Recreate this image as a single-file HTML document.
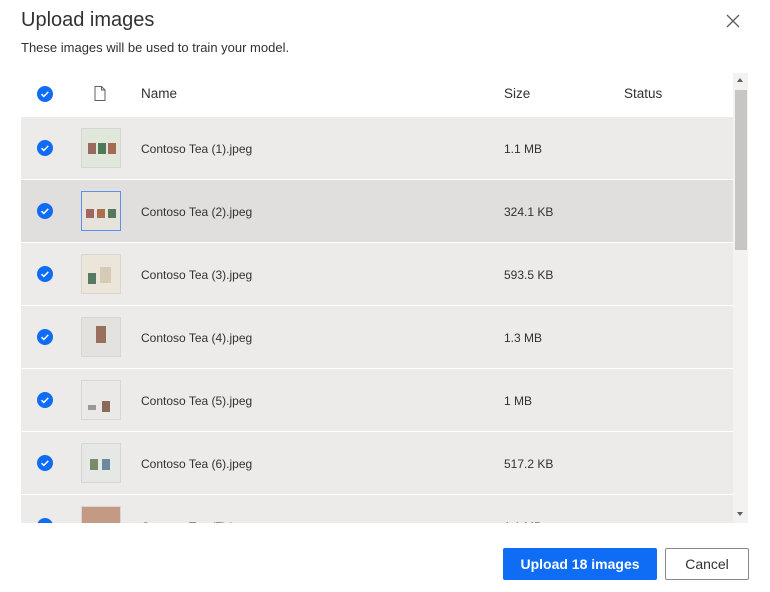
<!DOCTYPE html>
<html><head><style>
body{margin:0;width:770px;height:592px;background:#fff;font-family:"Liberation Sans",sans-serif;color:#323130;position:relative;overflow:hidden}
.abs{position:absolute}
h1{position:absolute;left:21px;top:9px;margin:0;font-size:20px;font-weight:normal;color:#323130}
.sub{left:21px;top:40px;font-size:13px}
.close{left:726px;top:14px}
.hdr{top:86px;font-size:13.5px}
.list{position:absolute;left:21px;top:117px;width:712px;height:406px;overflow:hidden}
.row{position:relative;height:62px;background:#edebe9;border-bottom:1px solid #fff}
.row.sel{background:#e1dfdd}
.chk{position:absolute;left:16px;top:23px;width:16px;height:16px;border-radius:50%;background:#0f6cf4}
.chk svg{position:absolute;left:3px;top:4px}
.th{position:absolute;left:60px;top:11px;width:38px;height:38px;border:1px solid #d8d6d4;background:#e9e8e4}
.th.b{border-color:#5c8ff0}
.nm{position:absolute;left:120px;top:25px;font-size:12px}
.sz{position:absolute;left:483px;top:25px;font-size:12px}
.can{display:inline-block;position:absolute;width:8px;height:11px;top:14px}
.btn{position:absolute;top:548px;height:32px;box-sizing:border-box;font-size:14px;text-align:center;line-height:32px;border-radius:2px}
</style></head><body>
<h1>Upload images</h1>
<div class="abs sub">These images will be used to train your model.</div>
<svg class="abs close" width="14" height="14"><path d="M1 1L13 13M13 1L1 13" stroke="#605e5c" stroke-width="1.3"/></svg>
<div class="abs" style="left:37px;top:86px;width:16px;height:16px;border-radius:50%;background:#0f6cf4"><svg width="16" height="16"><path d="M4.5 8.2l2.3 2.2 4.5-4.5" stroke="#fff" stroke-width="1.5" fill="none"/></svg></div>
<svg class="abs" style="left:94px;top:86px" width="12" height="15"><path d="M1 .5h6.5l3.5 3.5v10.5H1z M7.5 .5V4H11" stroke="#605e5c" fill="none"/></svg>
<div class="abs hdr" style="left:141px">Name</div>
<div class="abs hdr" style="left:504px">Size</div>
<div class="abs hdr" style="left:624px">Status</div>
<div class="abs" style="left:733px;top:73px;width:15px;height:450px;background:#f3f2f1"></div>
<div class="abs" style="left:735px;top:90px;width:12px;height:160px;background:#c8c6c4"></div>
<div class="abs" style="left:737px;top:78px;border:3px solid transparent;border-bottom:4px solid #605e5c;border-top:0"></div>
<div class="abs" style="left:737px;top:512px;border:3px solid transparent;border-top:4px solid #605e5c;border-bottom:0"></div>
<div class="list">
<div class="row"><div class="chk"><svg width="10" height="8"><path d="M1.5 4.2l2.3 2.2 4.5-4.5" stroke="#fff" stroke-width="1.5" fill="none"/></svg></div><div class="th" style="background:#dfe8da"><span class="can" style="left:6px;background:#9a6a60"></span><span class="can" style="left:16px;background:#4f7a5a"></span><span class="can" style="left:26px;background:#a66a52"></span></div><div class="nm">Contoso Tea (1).jpeg</div><div class="sz">1.1 MB</div></div>
<div class="row sel"><div class="chk"><svg width="10" height="8"><path d="M1.5 4.2l2.3 2.2 4.5-4.5" stroke="#fff" stroke-width="1.5" fill="none"/></svg></div><div class="th b" style="background:#e6e2dc"><span class="can" style="left:4px;top:17px;height:9px;background:#a0675e"></span><span class="can" style="left:15px;top:17px;height:9px;background:#a7714e"></span><span class="can" style="left:26px;top:17px;height:9px;background:#537a5c"></span></div><div class="nm">Contoso Tea (2).jpeg</div><div class="sz">324.1 KB</div></div>
<div class="row"><div class="chk"><svg width="10" height="8"><path d="M1.5 4.2l2.3 2.2 4.5-4.5" stroke="#fff" stroke-width="1.5" fill="none"/></svg></div><div class="th" style="background:#ece6da"><span class="can" style="left:6px;top:18px;background:#557b62"></span><span class="can" style="left:18px;top:12px;height:16px;width:11px;background:#d8cbb5"></span></div><div class="nm">Contoso Tea (3).jpeg</div><div class="sz">593.5 KB</div></div>
<div class="row"><div class="chk"><svg width="10" height="8"><path d="M1.5 4.2l2.3 2.2 4.5-4.5" stroke="#fff" stroke-width="1.5" fill="none"/></svg></div><div class="th" style="background:#e4e2df"><span class="can" style="left:14px;top:8px;width:10px;height:17px;background:#9a6f5c"></span></div><div class="nm">Contoso Tea (4).jpeg</div><div class="sz">1.3 MB</div></div>
<div class="row"><div class="chk"><svg width="10" height="8"><path d="M1.5 4.2l2.3 2.2 4.5-4.5" stroke="#fff" stroke-width="1.5" fill="none"/></svg></div><div class="th" style="background:#ebe9e7"><span class="can" style="left:20px;top:20px;background:#8a6a5a"></span><span class="can" style="left:6px;top:24px;height:5px;background:#999"></span></div><div class="nm">Contoso Tea (5).jpeg</div><div class="sz">1 MB</div></div>
<div class="row"><div class="chk"><svg width="10" height="8"><path d="M1.5 4.2l2.3 2.2 4.5-4.5" stroke="#fff" stroke-width="1.5" fill="none"/></svg></div><div class="th" style="background:#e6e8e6"><span class="can" style="left:8px;top:15px;background:#7a8a6a"></span><span class="can" style="left:20px;top:15px;background:#6a8aa0"></span></div><div class="nm">Contoso Tea (6).jpeg</div><div class="sz">517.2 KB</div></div>
<div class="row"><div class="chk"></div><div class="th" style="background:#c39a84"></div><div class="nm">Contoso Tea (7).jpeg</div><div class="sz">1.1 MB</div></div>
</div>
<div class="btn" style="left:503px;width:154px;background:#0f6cf4;color:#fff;font-weight:bold">Upload 18 images</div>
<div class="btn" style="left:665px;width:84px;border:1px solid #8a8886;color:#323130;line-height:30px">Cancel</div>
</body></html>
